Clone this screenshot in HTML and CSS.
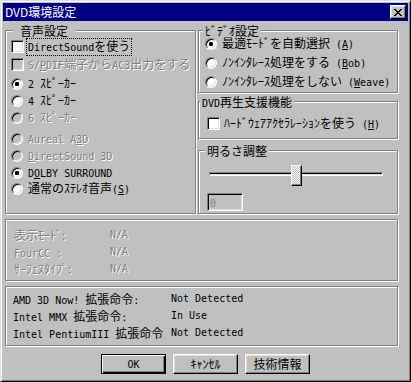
FILE: index.html
```html
<!DOCTYPE html>
<html lang="ja">
<head>
<meta charset="utf-8">
<title>DVD環境設定</title>
<link rel="stylesheet" href="styles.css">
</head>
<body>
<div class="window">
  <div class="titlebar">
    <span class="title">DVD環境設定</span>
    <span class="close"><svg width="8" height="7" viewBox="0 0 8 7" shape-rendering="crispEdges"><path fill="#000" d="M0 0h2v1h-2z M6 0h2v1h-2z M1 1h2v1h-2z M5 1h2v1h-2z M2 2h4v1h-4z M3 3h2v1h-2z M2 4h4v1h-4z M1 5h2v1h-2z M5 5h2v1h-2z M0 6h2v1h-2z M6 6h2v1h-2z"/></svg></span>
  </div>
  <div class="panes">
    <div class="top">
      <fieldset class="group audio">
        <legend class="lg lg-audio">音声設定</legend>
        <div class="content audio-list">
          <div class="opt chk"><span class="box"></span><span class="lbl focus"><span class="m">DirectSound</span>を使う</span></div>
          <div class="opt chk dis"><span class="box"></span><span class="lbl"><span class="m">S/<u>P</u>DIF</span>端子から<span class="m">AC3</span>出力をする</span></div>
          <div class="opt rad on gap5"><span class="dot"></span><span class="lbl"><span class="m">2 </span>ｽﾋﾟｰｶｰ</span></div>
          <div class="opt rad"><span class="dot"></span><span class="lbl"><span class="m">4 </span>ｽﾋﾟｰｶｰ</span></div>
          <div class="opt rad dis"><span class="dot"></span><span class="lbl"><span class="m">6 </span>ｽﾋﾟｰｶｰ</span></div>
          <div class="opt rad dis gap7"><span class="dot"></span><span class="lbl"><span class="m">Aureal A<u>3</u>D</span></span></div>
          <div class="opt rad dis"><span class="dot"></span><span class="lbl"><span class="m"><u>D</u>irectSound 3D</span></span></div>
          <div class="opt rad on"><span class="dot"></span><span class="lbl"><span class="m">D<u>O</u>LBY SURROUND</span></span></div>
          <div class="opt rad gap2"><span class="dot"></span><span class="lbl">通常のｽﾃﾚｵ音声<span class="m">(<u>S</u>)</span></span></div>
        </div>
      </fieldset>
      <div class="rightcol">
        <fieldset class="group video">
          <legend class="lg lg-video">ﾋﾞﾃﾞｵ設定</legend>
          <div class="content video-list">
            <div class="opt rad on"><span class="dot"></span><span class="lbl">最適ﾓｰﾄﾞを自動選択<span class="m"> (<u>A</u>)</span></span></div>
            <div class="opt rad"><span class="dot"></span><span class="lbl">ﾉﾝｲﾝﾀﾚｰｽ処理をする<span class="m"> (<u>B</u>ob)</span></span></div>
            <div class="opt rad"><span class="dot"></span><span class="lbl">ﾉﾝｲﾝﾀﾚｰｽ処理をしない<span class="m"> (<u>W</u>eave)</span></span></div>
          </div>
        </fieldset>
        <fieldset class="group accel">
          <legend class="lg lg-accel"><span class="m">DVD</span>再生支援機能</legend>
          <div class="content accel-list">
            <div class="opt chk"><span class="box"></span><span class="lbl">ﾊｰﾄﾞｳｪｱｱｸｾﾗﾚｰｼｮﾝを使う<span class="m"> (<u>H</u>)</span></span></div>
          </div>
        </fieldset>
        <fieldset class="group bright">
          <legend class="lg lg-bright">明るさ調整</legend>
          <div class="content bright-list">
            <div class="slider">
              <div class="track"></div>
              <div class="thumb"></div>
            </div>
            <div class="field"><span class="m">0</span></div>
          </div>
        </fieldset>
      </div>
    </div>
    <div class="group info">
      <span class="dis-t">表示ﾓｰﾄﾞ:</span><span class="dis-t m">N/A</span>
      <span class="dis-t"><span class="m">FourCC :</span></span><span class="dis-t m">N/A</span>
      <span class="dis-t">ｻｰﾌｪｽﾀｲﾌﾟ:</span><span class="dis-t m">N/A</span>
    </div>
    <div class="group cpu">
      <span><span class="m">AMD 3D Now! </span>拡張命令<span class="m">:</span></span><span class="m">Not Detected</span>
      <span><span class="m">Intel MMX </span>拡張命令<span class="m">:</span></span><span class="m">In Use</span>
      <span><span class="m">Intel PentiumIII </span>拡張命令</span><span class="m">Not Detected</span>
    </div>
  </div>
  <div class="buttons">
    <button class="btn default"><span class="m">OK</span></button>
    <button class="btn">ｷｬﾝｾﾙ</button>
    <button class="btn">技術情報</button>
  </div>
</div>
</body>
</html>
```

FILE: styles.css
```css
html, body {
  margin: 0;
  padding: 0;
  background: #c0c0c0;
}

body {
  font-family: "Noto Sans CJK JP", sans-serif;
  font-size: 12px;
  color: #000;
}

.m {
  font-family: "DejaVu Sans Mono", monospace;
  font-size: 10px;
}

u {
  text-decoration: underline;
  text-underline-offset: 1px;
}

.window {
  width: 411px;
  height: 382px;
  box-sizing: border-box;
  border: 1px solid;
  border-color: #dfdfdf #000 #000 #dfdfdf;
  box-shadow: inset 1px 1px 0 #fff, inset -1px -1px 0 #808080;
  padding: 2px;
  background: #c0c0c0;
  overflow: hidden;
}

.titlebar {
  height: 18px;
  background: #000080;
  color: #fff;
  display: flex;
  align-items: center;
  justify-content: space-between;
  padding: 0 2px;
}

.title {
  line-height: 18px;
  font-size: 12px;
}

.close {
  width: 16px;
  height: 14px;
  box-sizing: border-box;
  background: #c0c0c0;
  border: 1px solid;
  border-color: #fff #000 #000 #fff;
  box-shadow: inset -1px -1px 0 #808080, inset 1px 1px 0 #dfdfdf;
  display: flex;
  align-items: center;
  justify-content: center;
}

.close svg {
  display: block;
}

.panes {
  margin-top: 3px;
  padding: 0 10px 0 2px;
}

.top {
  display: flex;
  gap: 2px;
  align-items: stretch;
}

.group {
  margin: 0;
  padding: 0;
  min-inline-size: 0;
  border: 1px solid #808080;
  box-shadow: 1px 1px 0 #fff, inset 1px 1px 0 #fff;
}

.lg {
  font-size: 12px;
  line-height: 13px;
  height: 13px;
  overflow: visible;
  white-space: nowrap;
  background: #c0c0c0;
  padding: 0 2px;
}

.lg .m {
  line-height: 13px;
}

.lg-audio { margin-left: 7px; padding: 0 8px 0 7px; }
.lg-video { margin-left: 4px; }
.lg-accel { margin-left: 1px; }
.lg-bright { margin-left: 6px; }

.audio {
  width: 191px;
  box-sizing: border-box;
}

.rightcol {
  flex: 1;
  display: flex;
  flex-direction: column;
}

.content {
  display: flex;
  flex-direction: column;
}

.audio-list {
  padding: 2px 0 0 5px;
  gap: 3px;
}

.video-list {
  padding: 0 0 3px 6px;
  gap: 5px;
}

.accel {
  margin-top: 2px;
}

.accel-list {
  padding: 8px 0 7px 8px;
}

.bright {
  margin-top: 5px;
}

.bright-list {
  padding: 8px 0 2px 8px;
}

.opt {
  display: flex;
  align-items: center;
  line-height: 14px;
  white-space: nowrap;
}

.opt.chk { height: 15px; }
.opt.rad { height: 14px; }

.gap5 { margin-top: 2px; }
.gap7 { margin-top: 4px; }
.gap2 { margin-top: -1px; }

.box {
  width: 13px;
  height: 13px;
  box-sizing: border-box;
  flex: none;
  background: #fff;
  border: 1px solid;
  border-color: #808080 #fff #fff #808080;
  box-shadow: inset 1px 1px 0 #000, inset -1px -1px 0 #dfdfdf;
}

.dot {
  width: 12px;
  height: 12px;
  box-sizing: border-box;
  flex: none;
  border-radius: 50%;
  background: #fff;
  border: 1px solid;
  border-color: #808080 #fff #fff #808080;
  box-shadow: inset 1px 1px 0 #000, inset -1px -1px 0 #dfdfdf;
}

.on .dot {
  background: radial-gradient(circle at 50% 50%, #000 0 2px, #fff 2.4px);
}

.chk .lbl {
  margin-left: 3px;
  padding: 0 1px;
}

.rad .lbl {
  margin-left: 5px;
}

.focus {
  outline: 1px dotted #000;
  outline-offset: 0;
}

.dis .lbl,
.dis-t {
  color: #808080;
  text-shadow: 1px 1px 0 #fff;
}

.dis .box,
.dis .dot {
  background: #c0c0c0;
}

.slider {
  position: relative;
  height: 22px;
  padding-top: 7px;
  box-sizing: border-box;
}

.track {
  margin-left: 2px;
  width: 174px;
  height: 4px;
  box-sizing: border-box;
  border: 1px solid;
  border-color: #808080 #fff #fff #808080;
  background: linear-gradient(#000 0 50%, #dfdfdf 50% 100%);
}

.thumb {
  position: absolute;
  left: 84px;
  top: 0;
  width: 11px;
  height: 21px;
  box-sizing: border-box;
  border: 1px solid;
  border-color: #fff #000 #000 #fff;
  box-shadow: inset -1px -1px 0 #808080, inset 1px 1px 0 #dfdfdf;
  background-color: #c0c0c0;
  background-image: repeating-conic-gradient(#fff 0% 25%, #c0c0c0 0% 50%);
  background-size: 2px 2px;
}

.field {
  margin-top: 6px;
  width: 36px;
  height: 18px;
  box-sizing: border-box;
  border: 1px solid;
  border-color: #808080 #fff #fff #808080;
  box-shadow: inset 1px 1px 0 #000, inset -1px -1px 0 #dfdfdf;
  background: #c0c0c0;
  color: #808080;
  padding-left: 2px;
  line-height: 16px;
}

.info {
  margin-top: 5px;
  display: grid;
  grid-template-columns: 96px auto;
  grid-auto-rows: 14px;
  row-gap: 3px;
  line-height: 14px;
  padding: 8px 0 4px 8px;
  white-space: nowrap;
}

.cpu {
  margin-top: 5px;
  display: grid;
  grid-template-columns: 158px auto;
  grid-auto-rows: 17px;
  line-height: 17px;
  padding: 3px 0 4px 7px;
  white-space: nowrap;
}

.buttons {
  display: flex;
  justify-content: center;
  gap: 7px;
  margin-top: 8px;
}

.btn {
  width: 65px;
  height: 20px;
  box-sizing: border-box;
  margin: 0;
  padding: 0;
  font-family: "Noto Sans CJK JP", sans-serif;
  font-size: 12px;
  color: #000;
  background: #c0c0c0;
  border: 1px solid;
  border-color: #fff #000 #000 #fff;
  box-shadow: inset -1px -1px 0 #808080, inset 1px 1px 0 #dfdfdf;
  line-height: 16px;
}

.btn.default {
  border: 1px solid #000;
  box-shadow: inset 1px 1px 0 #fff, inset -1px -1px 0 #000, inset -2px -2px 0 #808080;
}
```
